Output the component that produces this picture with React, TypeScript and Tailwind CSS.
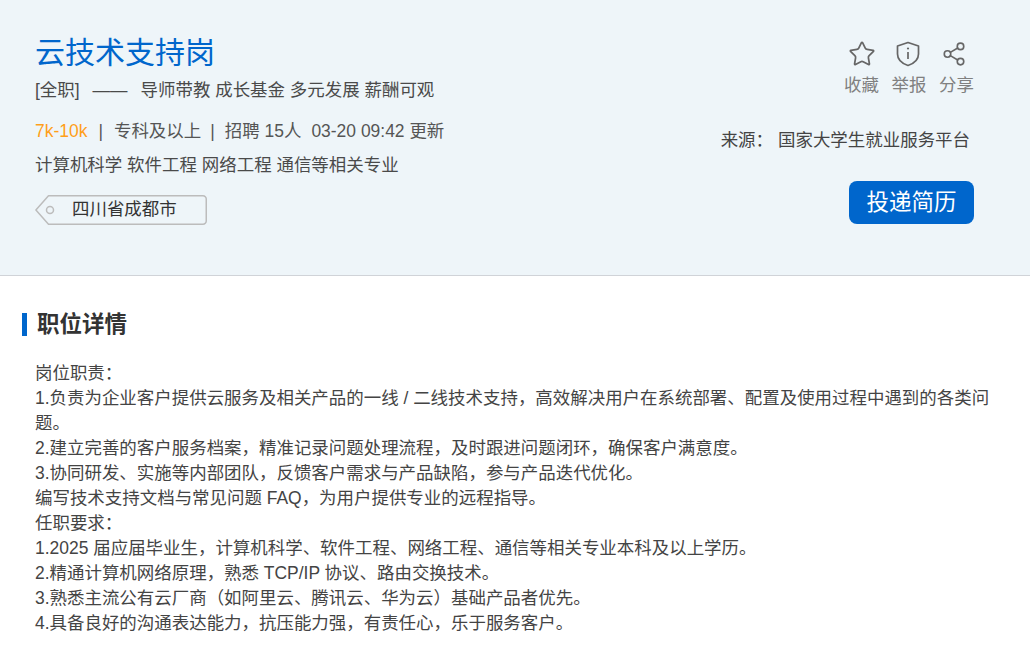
import { Star, Share2 } from "lucide-react";

const font = { fontFamily: '"Liberation Sans", "Noto Sans CJK SC", sans-serif' };

const duties = [
  "岗位职责：",
  "1.负责为企业客户提供云服务及相关产品的一线 / 二线技术支持，高效解决用户在系统部署、配置及使用过程中遇到的各类问题。",
  "2.建立完善的客户服务档案，精准记录问题处理流程，及时跟进问题闭环，确保客户满意度。",
  "3.协同研发、实施等内部团队，反馈客户需求与产品缺陷，参与产品迭代优化。",
  "编写技术支持文档与常见问题 FAQ，为用户提供专业的远程指导。",
  "任职要求：",
  "1.2025 届应届毕业生，计算机科学、软件工程、网络工程、通信等相关专业本科及以上学历。",
  "2.精通计算机网络原理，熟悉 TCP/IP 协议、路由交换技术。",
  "3.熟悉主流公有云厂商（如阿里云、腾讯云、华为云）基础产品者优先。",
  "4.具备良好的沟通表达能力，抗压能力强，有责任心，乐于服务客户。",
];

function ShieldIcon() {
  return (
    <svg width="26" height="26" viewBox="0 0 26 26" fill="none" stroke="#666" strokeWidth="1.7">
      <path d="M13 1.5 L23.5 5 V13 C23.5 18.5 19 22.5 13 24.5 C7 22.5 2.5 18.5 2.5 13 V5 Z" strokeLinejoin="round" />
      <path d="M13 11 V18" />
      <circle cx="13" cy="7.5" r="1.1" fill="#666" stroke="none" />
    </svg>
  );
}

function Action({ icon, label }: { icon: React.ReactNode; label: string }) {
  return (
    <div className="flex flex-col items-center w-[35px]">
      <div className="h-[26px] flex items-center justify-center">{icon}</div>
      <span className="mt-[7px] text-[17.47px] leading-[22px] text-[#808080] whitespace-nowrap">{label}</span>
    </div>
  );
}

function LocationTag({ name }: { name: string }) {
  return (
    <div className="relative w-[172px] h-[30px] mt-[18px]">
      <svg className="absolute inset-0" width="172" height="30" viewBox="0 0 172 30" fill="none">
        <path
          d="M13.5 0.75 H168 A3.25 3.25 0 0 1 171.25 4 V26 A3.25 3.25 0 0 1 168 29.25 H13.5 L0.9 15 Z"
          stroke="#bcbcbc"
          strokeWidth="1.5"
          strokeLinejoin="round"
        />
        <circle cx="15" cy="15" r="3.5" stroke="#bcbcbc" strokeWidth="1.5" />
      </svg>
      <div className="relative pl-[37px] text-[17.47px] leading-[29px] text-[#333]">{name}</div>
    </div>
  );
}

export default function App() {
  return (
    <div className="w-[1030px] h-[652px] overflow-hidden bg-white" style={font}>
      <header className="h-[276px] bg-[#eef5f9] border-b border-[#d0d3d8] pl-[35px] pr-[56px] flex justify-between">
        <div className="pt-[34px]">
          <h1 className="text-[30px] leading-[38px] text-[#0066cc] font-normal">云技术支持岗</h1>
          <p className="mt-[6px] text-[17.47px] leading-[24px] text-[#4a4a4a] whitespace-nowrap">
            [全职]<span className="mx-[13px]">——</span>导师带教 成长基金 多元发展 薪酬可观
          </p>
          <p className="mt-[17px] text-[17.47px] leading-[24px] text-[#555] whitespace-nowrap">
            <span className="text-[#ff9f1a]">7k-10k</span>
            <span className="mx-[11px]">|</span>专科及以上<span className="ml-[9px] mr-[10px]">|</span>招聘 15人
            <span className="ml-[10px]">03-20 09:42 更新</span>
          </p>
          <p className="mt-[10px] text-[17.47px] leading-[24px] text-[#4a4a4a]">计算机科学 软件工程 网络工程 通信等相关专业</p>
          <LocationTag name="四川省成都市" />
        </div>
        <div className="pt-[41px] flex flex-col items-end">
          <div className="flex gap-[12.5px]">
            <Action icon={<Star size={28} strokeWidth={1.5} color="#666" />} label="收藏" />
            <Action icon={<div className="mr-[3px]"><ShieldIcon /></div>} label="举报" />
            <Action icon={<Share2 size={26} strokeWidth={1.5} color="#666" className="mr-[5px]" />} label="分享" />
          </div>
          <p className="mt-[32px] mr-[4px] text-[17.47px] leading-[24px] text-[#444] whitespace-nowrap">
            来源：<span className="ml-[5px]">国家大学生就业服务平台</span>
          </p>
          <button className="mt-[29px] w-[125px] h-[43px] rounded-[8px] bg-[#0066cc] text-white text-[22.5px]">投递简历</button>
        </div>
      </header>
      <section className="pt-[37px] pl-[22px]">
        <h2 className="border-l-[5px] border-[#0066cc] pl-[10px] h-[23px] leading-[23px] text-[22.5px] font-bold text-[#333]">职位详情</h2>
        <div className="mt-[25px] ml-[13px] w-[960px] text-[17.47px] leading-[25px] text-[#444]">
          {duties.map((line) => (
            <p key={line}>{line}</p>
          ))}
        </div>
      </section>
    </div>
  );
}
